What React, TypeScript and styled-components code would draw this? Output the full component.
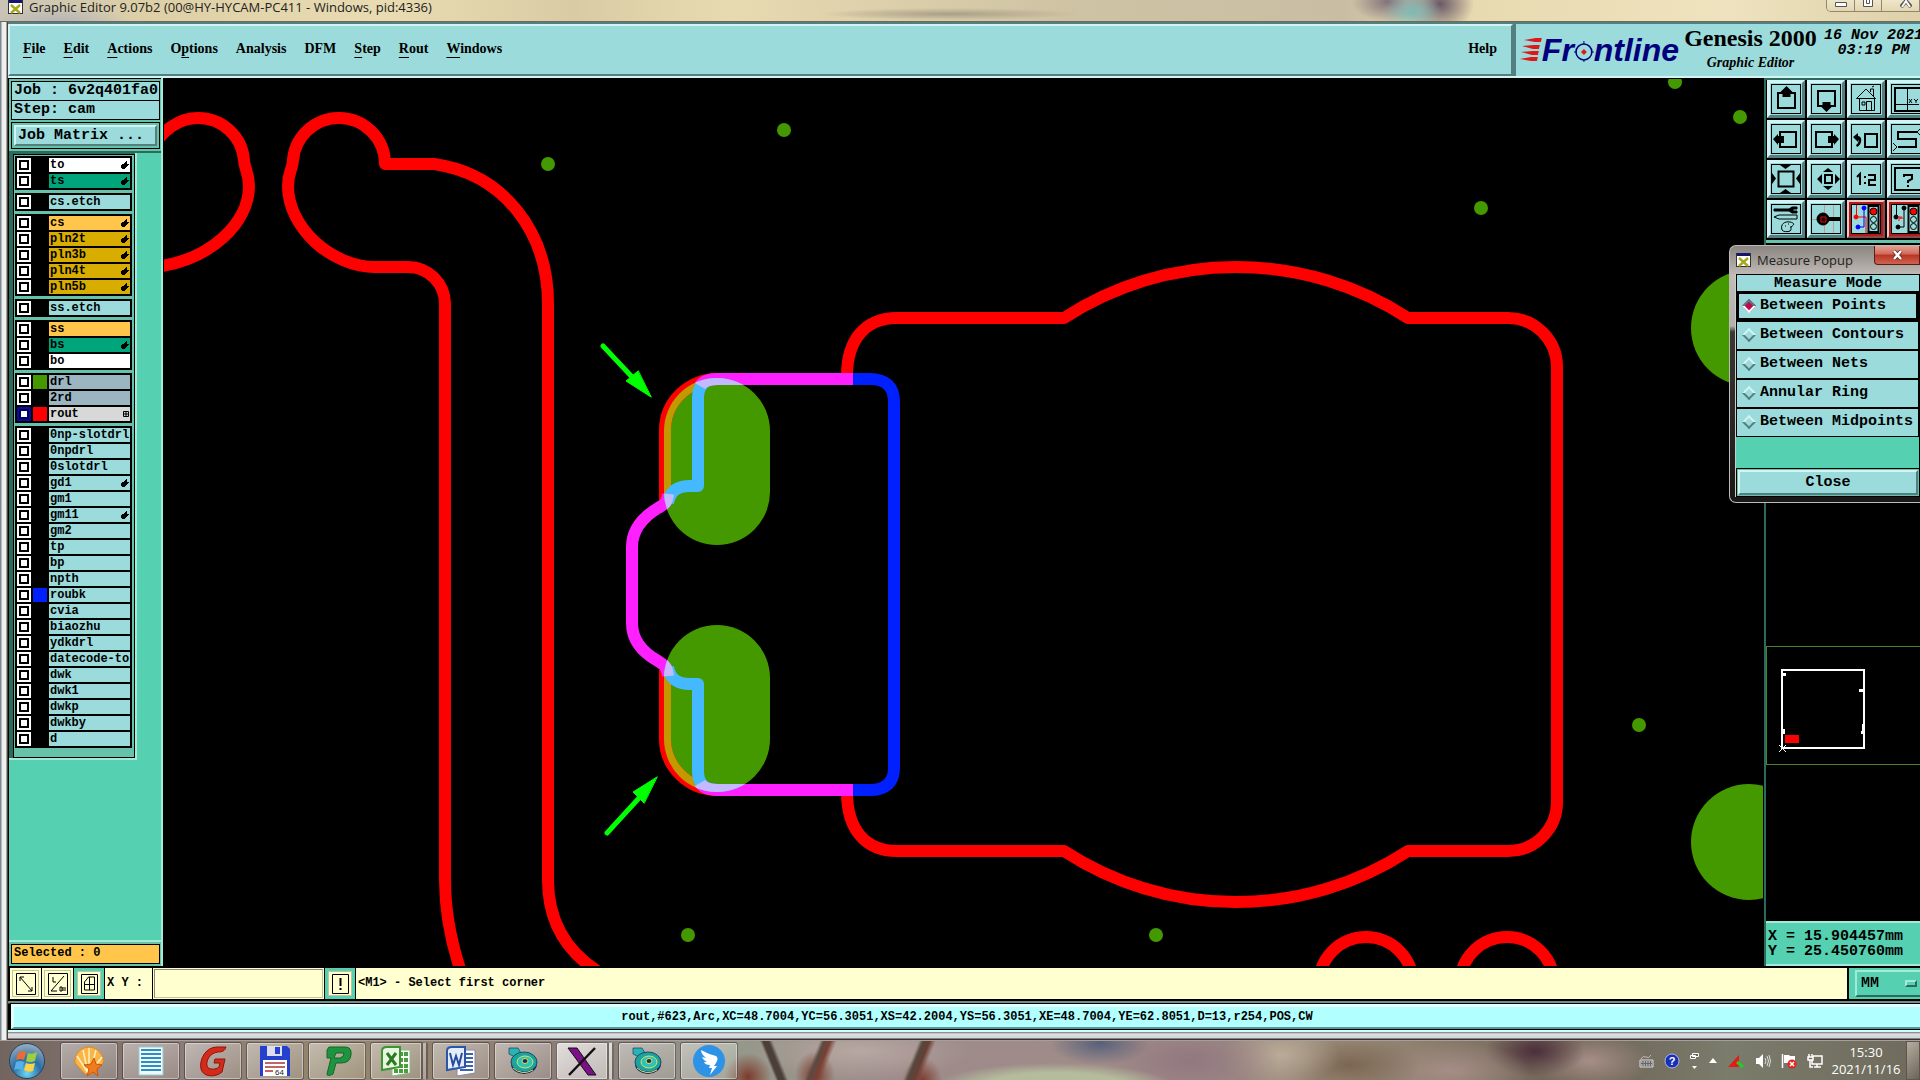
import React from 'react';
import styled, { createGlobalStyle, css } from 'styled-components';

const c = {
  aqua: '#9bdbdb',
  aquaLight: '#d2f4f4',
  aquaDark: '#547f80',
  teal: '#55d0b0',
  tealFrame: '#66c2ab',
  tealLight: '#a5ead8',
  tealDark: '#2d6a5c',
  cream: '#ffffcf',
  green: '#449900',
  red: '#ff0000',
  blue: '#0020ff',
};
const mono = '"Liberation Mono", "DejaVu Sans Mono", monospace';
const serif = '"Liberation Serif", "DejaVu Serif", serif';
const sans = '"Open Sans", "Noto Sans", sans-serif';

const Global = createGlobalStyle`
  * { box-sizing: border-box; }
  body { margin: 0; background: #000; overflow: hidden; }
  button, input, select { font: inherit; color: inherit; margin: 0; padding: 0; border-radius: 0; }
  svg { display: block; }
`;

const bevel = (light: string, dark: string, size = 2) => css`
  border: ${size}px solid;
  border-color: ${light} ${dark} ${dark} ${light};
`;

/* ---------- window ---------- */
const Desktop = styled.div`
  position: relative;
  display: flex;
  flex-direction: column;
  height: 100vh;
  overflow: hidden;
  font: bold 15px/18px ${mono};
  color: #000;
`;
const TitleBar = styled.header`
  display: flex;
  justify-content: space-between;
  align-items: flex-start;
  flex: none;
  height: 22px;
  padding-left: 8px;
  font: 13px/14px ${sans};
  color: #222;
  border-bottom: 1px solid #6f6a58;
  background:
    radial-gradient(ellipse 70px 16px at 60px 22px, #b5b3b8, transparent),
    radial-gradient(ellipse 30px 20px at 1412px 12px, #7fb9b6, transparent),
    radial-gradient(ellipse 34px 28px at 1440px 4px, #6a5866, transparent),
    radial-gradient(ellipse 36px 20px at 1388px 2px, #82707a, transparent),
    radial-gradient(ellipse 130px 6px at 950px 14px, #a99f86, transparent),
    linear-gradient(90deg, #c9c4b6 0, #ded0a6 8%, #e9dcb2 20%, #d9cca4 30%, #e8dab0 38%, #cfc3a4 55%, #c9bea4 70%, #e8dab0 77%, #efe3bf 90%, #ddd0aa 100%);
`;
const Title = styled.div`
  display: flex;
  align-items: center;
  gap: 6px;
  white-space: nowrap;
`;
const Captions = styled.div`
  display: flex;
  width: 94px;
  height: 12px;
  border: 1px solid #8f8773;
  border-top: 0;
  border-bottom-left-radius: 5px;
  overflow: hidden;
`;
const Caption = styled.button<{ $w: number }>`
  display: flex;
  flex: none;
  justify-content: center;
  width: ${p => p.$w}px;
  border: 0;
  border-right: 1px solid #8f8773;
  background: linear-gradient(#efe6ca, #e3d7b0);
`;
const Frame = styled.div`
  display: flex;
  flex-direction: column;
  flex: 1;
  min-height: 0;
  padding-left: 8px;
  background: linear-gradient(90deg, #7c8a90 0, #7c8a90 1px, #e9eef2 2px, #f4f1e8 6px, #555 7px, #333 8px);
`;

/* ---------- menu bar ---------- */
const Top = styled.div`
  display: flex;
  flex: none;
  height: 56px;
  background: ${c.aqua};
  border-top: 2px solid ${c.aquaDark};
  border-bottom: 2px solid ${c.aquaLight};
  overflow: hidden;
`;
const MenuBar = styled.nav`
  display: flex;
  flex: 1;
  align-items: center;
  gap: 18px;
  padding: 0 14px 3px 13px;
  font: bold 14px/18px ${serif};
  ${bevel(c.aquaLight, c.aquaDark)}
`;
const MenuItem = styled.button<{ $end?: boolean }>`
  border: 0;
  background: none;
  margin-left: ${p => (p.$end ? 'auto' : '0')};
  u { text-underline-offset: 4px; text-decoration-thickness: 1px; }
`;
const Brand = styled.div`
  display: flex;
  flex: none;
  width: 407px;
  padding-left: 4px;
  border-left: 3px solid ${c.aquaDark};
  white-space: nowrap;
`;
const Logo = styled.div`
  display: flex;
  align-items: center;
  width: 159px;
  height: 52px;
  flex: none;
  font: italic bold 32px/32px "Liberation Sans", Arial, sans-serif;
  color: #00007c;
`;
const Product = styled.div`
  width: 143px;
  flex: none;
  padding-top: 1px;
  text-align: center;
`;
const ProductName = styled.div`
  font: bold 24px/26px ${serif};
`;
const ProductSub = styled.div`
  font: italic bold 14px/24px ${serif};
`;
const Clock = styled.div`
  flex: none;
  width: 103px;
  padding-top: 4px;
  font: italic bold 15px/15px ${mono};
  text-align: center;
`;

/* ---------- left side ---------- */
const Main = styled.main`
  display: flex;
  flex: 1;
  min-height: 0;
  background: #000;
`;
const Side = styled.aside`
  display: flex;
  flex-direction: column;
  flex: none;
  width: 155px;
  background: ${c.tealFrame};
  border-right: 2px solid ${c.tealLight};
  border-left: 1px solid #000;
`;
const JobInfo = styled.div`
  padding: 2px 1px 2px 2px;
  border-top: 1px solid #000;
`;
const InfoLine = styled.div`
  height: 20px;
  padding-left: 2px;
  border: 1px solid #000;
  background: ${c.aqua};
  line-height: 18px;
  white-space: nowrap;
  & + & { margin-top: -1px; }
`;
const MatrixFrame = styled.div`
  margin: 0 1px 2px 2px;
  padding: 2px;
  border: 1px solid #000;
`;
const MatrixButton = styled.button`
  display: block;
  width: 100%;
  height: 21px;
  padding-left: 2px;
  text-align: left;
  line-height: 17px;
  background: ${c.aqua};
  ${bevel(c.aquaLight, c.aquaDark)}
`;
const LayerPane = styled.div`
  flex: 1;
  min-height: 0;
  background: ${c.teal};
  border-top: 2px solid ${c.tealDark};
  border-bottom: 2px solid ${c.tealLight};
`;
const LayerShade = styled.div`
  width: 128px;
  padding: 1px 0 0 4px;
  background: ${c.tealDark};
  border-right: 2px solid ${c.tealLight};
  border-bottom: 2px solid ${c.tealLight};
`;
const LayerList = styled.div`
  display: flex;
  flex-direction: column;
  gap: 3px;
  padding: 1px 2px 9px 1px;
  border: 1px solid #000;
  background: ${c.tealFrame};
`;
const LayerGroup = styled.div`
  display: flex;
  flex-direction: column;
  gap: 2px;
  padding: 2px;
  width: 117px;
  background: #000;
`;
const LayerRow = styled.label`
  display: grid;
  grid-template-columns: 14px 14px 81px;
  gap: 2px;
  height: 14px;
`;
const LayerBox = styled.input`
  appearance: none;
  width: 14px;
  height: 14px;
  background: #fff;
  border: 2px solid #fff;
  box-shadow: inset 0 0 0 2px #000;
  &:checked { border-color: #0b0b98; box-shadow: inset 0 0 0 2px #00005c; }
`;
const Swatch = styled.span<{ $c?: string }>`
  background: ${p => p.$c || '#000'};
`;
const LayerName = styled.span<{ $bg: string }>`
  display: flex;
  justify-content: space-between;
  align-items: center;
  padding: 0 1px;
  background: ${p => p.$bg};
  font: bold 12px/14px ${mono};
  white-space: nowrap;
`;
const Selected = styled.div`
  flex: none;
  margin: 2px 1px 2px 2px;
  height: 20px;
  padding-left: 2px;
  border: 1px solid #000;
  background: #ffc64b;
  font: bold 12px/17px ${mono};
`;

/* ---------- canvas and right side ---------- */
const Canvas = styled.section`
  flex: 1;
  min-width: 0;
  margin: 1px 1px 0 1px;
  overflow: hidden;
`;
const Right = styled.aside`
  display: flex;
  flex-direction: column;
  flex: none;
  width: 156px;
  border-left: 2px solid ${c.tealDark};
  overflow: hidden;
`;
const Tools = styled.div`
  display: grid;
  grid-template-columns: repeat(4, 38px);
  gap: 2px;
  padding: 0 0 2px 1px;
  border-top: 2px solid ${c.tealDark};
  border-bottom: 3px solid ${c.tealFrame};
`;
const ToolButton = styled.button<{ $hot?: boolean }>`
  width: 38px;
  height: 38px;
  padding: 1px;
  background: ${p => (p.$hot ? '#b01c1c' : c.aqua)};
  ${bevel(c.aquaLight, c.aquaDark, 3)}
  ${p => p.$hot && css`
    border-width: 2px;
    padding: 2px;
    border-color: #f0c8c8 #8a4a4a #8a4a4a #f0c8c8;
  `}
`;
const MiniMap = styled.div`
  margin-top: auto;
  height: 119px;
  border: 1px solid #44862c;
  border-right: 0;
`;
const Coords = styled.div`
  margin-top: 156px;
  height: 45px;
  padding: 6px 0 0 2px;
  border-top: 2px solid ${c.tealLight};
  border-bottom: 2px solid ${c.tealLight};
  background: ${c.teal};
  line-height: 15px;
  white-space: pre;
`;

/* ---------- command and status lines ---------- */
const Command = styled.div`
  display: flex;
  flex: none;
  height: 35px;
  padding: 2px 0 2px 2px;
  gap: 1px;
  background: #000;
  font: bold 12px/14px ${mono};
`;
const CmdButton = styled.button<{ $framed?: boolean }>`
  display: flex;
  align-items: center;
  justify-content: center;
  flex: none;
  width: ${p => (p.$framed ? '30px' : '31px')};
  border: ${p => (p.$framed ? '3px' : '2px')} solid ${p => (p.$framed ? c.teal : c.cream)};
  background: ${c.cream};
  box-shadow: inset 0 0 0 1px #c4c49c;
`;
const XYLabel = styled.label`
  flex: none;
  width: 47px;
  padding: 8px 0 0 2px;
  background: ${c.cream};
  white-space: pre;
`;
const XYField = styled.input`
  flex: none;
  width: 171px;
  padding: 0 4px;
  border: 2px solid;
  border-color: #8c8c74 #c4c49c #c4c49c #8c8c74;
  outline: 1px solid ${c.cream};
  outline-offset: -1px;
  background: ${c.cream};
`;
const Hint = styled.output`
  flex: 1;
  padding: 8px 0 0 2px;
  background: ${c.cream};
`;
const UnitBox = styled.div`
  flex: none;
  position: relative;
  width: 71px;
  margin-left: 1px;
  padding: 2px 0 2px 6px;
  background: ${c.teal};
  overflow: hidden;
`;
const Unit = styled.select`
  appearance: none;
  width: 76px;
  height: 27px;
  padding-left: 4px;
  background: ${c.teal};
  font: bold 15px/18px ${mono};
  ${bevel(c.tealLight, c.tealDark)}
`;
const UnitMark = styled.span`
  position: absolute;
  top: 12px;
  right: 3px;
  width: 12px;
  height: 7px;
  pointer-events: none;
  ${bevel(c.tealLight, c.tealDark)}
`;
const StatusWrap = styled.div`
  flex: none;
  height: 39px;
  padding: 2px 0 0 2px;
  background: linear-gradient(#6f8f8c 0, #6f8f8c 2px, #000 3px, #000 29px, #c9ffff 29px, #c9ffff 31px, #777 31px, #dedede 33px, #d2d4d6 37px, #333 38px);
`;
const Status = styled.div`
  height: 27px;
  border: 1px solid #000;
  border-right: 0;
`;
const StatusText = styled.div`
  height: 25px;
  border-top: 3px solid #e2ffff;
  border-left: 3px solid #e2ffff;
  border-bottom: 2px solid #5b9593;
  background: #b2ffff;
  font: bold 12px/20px ${mono};
  text-align: center;
`;

/* ---------- measure popup ---------- */
const Popup = styled.div`
  position: absolute;
  top: 245px;
  right: 0;
  width: 191px;
  height: 258px;
  padding: 0 0 0 5px;
  border: 1px solid #bbb;
  border-right: 0;
  border-radius: 7px 0 0 7px;
  background: linear-gradient(#8a8580 0, #c3bcb8 30px, #b5b0ac 80px, #3a3734 86px, #1a1816 100%);
`;
const PopupTitle = styled.div`
  display: flex;
  align-items: center;
  gap: 6px;
  height: 28px;
  padding-left: 1px;
  font: 13px/18px ${sans};
  color: #222;
`;
const PopupClose = styled.button`
  align-self: flex-start;
  margin-left: auto;
  width: 46px;
  height: 19px;
  border: 1px solid #5a1c14;
  border-top: 0;
  border-bottom-left-radius: 4px;
  background: linear-gradient(#e0a294 0, #d2695a 45%, #b93422 50%, #cf6250 100%);
`;
const PopupBody = styled.fieldset`
  margin: 0;
  padding: 1px 1px 1px 0;
  min-width: 0;
  height: 223px;
  border: 0;
  border-left: 1px solid #ccc;
  background: #000;
`;
const PopupHead = styled.div`
  height: 16px;
  margin: 0 0 1px 1px;
  background: ${c.aqua};
  line-height: 17px;
  text-align: center;
`;
const Mode = styled.label`
  display: flex;
  align-items: center;
  gap: 6px;
  height: 29px;
  padding: 0 4px 2px 7px;
  border: 1px solid #000;
  background: ${c.aqua};
  white-space: nowrap;
  &:has(input:checked) { border-width: 2px 3px 3px; padding-left: 5px; padding-bottom: 0; }
`;
const Diamond = styled.input`
  appearance: none;
  flex: none;
  width: 10px;
  height: 10px;
  transform: rotate(45deg);
  ${bevel(c.aquaLight, c.aquaDark)}
  &:checked { background: #c00a50; border-color: #547f80 #fff #fff #547f80; }
`;
const PopupGap = styled.div`
  height: 31px;
  background: ${c.teal};
`;
const CloseFrame = styled.div`
  margin: 1px 0 0 1px;
  padding: 1px;
  background: ${c.tealFrame};
`;
const CloseButton = styled.button`
  display: block;
  width: 100%;
  height: 25px;
  background: ${c.aqua};
  ${bevel(c.aquaLight, c.aquaDark)}
`;

/* ---------- taskbar ---------- */
const Taskbar = styled.footer`
  display: flex;
  flex: none;
  align-items: center;
  height: 40px;
  padding-left: 8px;
  border-top: 1px solid #a79f9a;
  color: #fff;
  font: 13px/17px ${sans};
  overflow: hidden;
  background:
    linear-gradient(112deg, transparent 760px, #5a4a42 764px, #7a4034 770px, transparent 776px),
    linear-gradient(112deg, transparent 852px, #54483e 856px, #6a3d32 862px, transparent 868px),
    linear-gradient(68deg, transparent 719px, #4b3f3a 722px, #4b3f3a 727px, transparent 731px),
    radial-gradient(ellipse 20px 24px at 815px 34px, #7c3b2c, transparent),
    radial-gradient(ellipse 24px 24px at 748px 36px, #7c3b2c, transparent),
    radial-gradient(ellipse 20px 24px at 922px 40px, #7c3b2c, transparent),
    radial-gradient(ellipse 120px 24px at 1055px 46px, #b4bc9c 60%, transparent),
    radial-gradient(ellipse 50px 22px at 1100px 2px, #56607a, transparent),
    radial-gradient(ellipse 110px 30px at 860px 10px, #b8a8a2, transparent),
    radial-gradient(ellipse 90px 40px at 1190px 20px, #927780, transparent),
    radial-gradient(ellipse 60px 30px at 1280px 14px, #b9ab98, transparent),
    radial-gradient(ellipse 70px 30px at 1350px 24px, #7b6653, transparent),
    radial-gradient(ellipse 80px 30px at 1450px 30px, #a58d86, transparent),
    radial-gradient(ellipse 50px 26px at 1535px 10px, #4c2f3b, transparent),
    radial-gradient(ellipse 60px 30px at 1590px 20px, #a68e86, transparent),
    linear-gradient(90deg, #72645f 0, #8d7d76 10%, #94866a 18%, #8c7c78 30%, #95998a 38%, #9d8b8a 46%, #a08c88 60%, #9c8c7a 70%, #6e6254 82%, #7a7c6c 90%, #6f6a5c 100%);
`;
const Start = styled.button`
  flex: none;
  width: 38px;
  height: 38px;
  margin-right: 14px;
  border: 0;
  background: none;
`;
const Tasks = styled.div`
  display: flex;
  gap: 4px;
`;
const Task = styled.button<{ $stack?: boolean; $on?: boolean }>`
  display: flex;
  align-items: center;
  justify-content: center;
  width: 58px;
  height: 38px;
  border: 1px solid rgba(40, 30, 30, 0.55);
  border-radius: 3px;
  box-shadow: inset 0 0 0 1px rgba(255, 255, 255, 0.4);
  background: linear-gradient(150deg, rgba(255, 255, 255, ${p => (p.$on ? 0.75 : 0.45)}), rgba(255, 255, 255, ${p => (p.$on ? 0.45 : 0.12)}));
  ${p => p.$stack && css`
    border-right: 7px double rgba(70, 60, 55, 0.7);
  `}
`;
const Tray = styled.div`
  display: flex;
  align-items: center;
  gap: 10px;
  margin-left: auto;
`;
const TrayClock = styled.time`
  width: 70px;
  margin: 0 -5px 0 -2px;
  text-align: center;
`;
const ShowDesktop = styled.button`
  width: 14px;
  height: 39px;
  border: 1px solid #5c564c;
  background: linear-gradient(135deg, #b5ada0, #6c6458);
`;

/* ---------- drawings ---------- */
const XIcon = () => (
  <svg width="15" height="14" viewBox="0 0 15 14">
    <rect x="0.5" y="0.5" width="14" height="13" fill="#fff" stroke="#333" />
    <rect x="1" y="0" width="13" height="3" fill="#16166c" />
    <path d="M3 5l9 8M12 5l-9 8" stroke="#a8a81c" strokeWidth="2.4" />
  </svg>
);
const Hand = () => (
  <svg width="8" height="8" viewBox="0 0 8 8">
    <path d="M0 4h1V3h2V2h1V1h1V0h1v3h2v1H7v1H6v1H5v1H4v1H1V7H0z" fill="#000" />
  </svg>
);
const GridMark = () => (
  <svg width="6" height="6" viewBox="0 0 6 6">
    <path d="M0.5 0.5h5v5h-5zM3 0v6M0 3h6" fill="none" stroke="#000" />
  </svg>
);

const boardOutline = [
  'M150 152 C162 129 180 118 198 118 A46 46 0 0 1 244 160 C244 168 249 172 249 186 C249 222 212 260 155 267',
  'M385 164 A46 46 0 0 0 338 118 A46 46 0 0 0 293 160 C293 168 288 172 288 186 C288 228 332 267 375 267 H408 A37 37 0 0 1 445 304 V880 C445 915 452 945 461 972',
  'M385 160 V164 H434 C504 174 548 232 548 304 V880 C548 925 570 955 602 974',
  'M847 376 C847 340 865 318 897 318 H1064 A315 315 0 0 1 1408 318 H1508 A49 49 0 0 1 1557 367 V802 A49 49 0 0 1 1508 851 H1408 A315 315 0 0 1 1064 851 H897 C865 851 847 829 847 792',
];
const slotTop = 'M718 379 A53 51 0 0 0 665 430 V500';
const slotBottom = 'M718 790 A53 51 0 0 1 665 739 V670';
const plugTop = 'M847 379 H718 C704 379 698 386 698 398 V486 H690 C676 486 670 492 668 503';
const plugBottom = 'M847 790 H718 C704 790 698 783 698 771 V684 H690 C676 684 670 678 668 667';
const plugRight = 'M847 379 H870 C886 379 894 387 894 402 V768 C894 782 886 790 870 790 H847';
const shared = [
  'M847 379 H718 C708 379 703 381 700 386',
  'M847 790 H718 C708 790 703 788 700 783',
  'M668 494 C667 504 664 504 658 508 C640 519 632 532 632 547 V623 C632 638 640 651 658 661 C664 665 667 666 668 676',
];
const holes = [[784, 130], [548, 164], [1675, 82], [1740, 117], [1481, 208], [1639, 725], [688, 935], [1156, 935]];

const Board = () => (
  <svg width="100%" height="100%" fill="none" role="img" aria-label="Board layout">
    <defs>
      <clipPath id="pads">
        <rect x="664" y="378" width="106" height="167" rx="53" />
        <rect x="664" y="625" width="106" height="167" rx="53" />
      </clipPath>
    </defs>
    <g transform="translate(-164 -79)" strokeWidth="12" strokeLinejoin="round">
      {holes.map(([x, y]) => <circle key={x} cx={x} cy={y} r="7" fill={c.green} />)}
      <circle cx="1749" cy="328" r="58" fill={c.green} />
      <circle cx="1749" cy="842" r="58" fill={c.green} />
      <rect x="664" y="378" width="106" height="167" rx="53" fill={c.green} />
      <rect x="664" y="625" width="106" height="167" rx="53" fill={c.green} />
      <g stroke={c.red}>
        {boardOutline.map(d => <path key={d} d={d} />)}
        <circle cx="1366" cy="984" r="47" />
        <circle cx="1507" cy="984" r="47" />
        <path d={slotTop} />
        <path d={slotBottom} />
      </g>
      <path d={plugRight} stroke={c.blue} />
      <g stroke="#ff20ff">
        {shared.map(d => <path key={d} d={d} />)}
        <path d="M846 379h7M846 790h7" />
      </g>
      <g clipPath="url(#pads)">
        <path d={slotTop} stroke="#c49900" />
        <path d={slotBottom} stroke="#c49900" />
        <path d={plugTop} stroke="#44b9ff" />
        <path d={plugBottom} stroke="#44b9ff" />
        <g stroke="#c4b9ff">{shared.map(d => <path key={d} d={d} />)}</g>
      </g>
      <g stroke="#00ff00" strokeWidth="5" strokeLinecap="round">
        <path d="M603 346L634 379M607 833L640 797" />
        <path d="M651 397L626 381L638 371ZM657 777L633 792L644 803Z" fill="#00ff00" strokeWidth="1" />
      </g>
    </g>
  </svg>
);

const solid = { fill: '#000', stroke: 'none' };
const lights = (
  <>
    <path d="M17.5 2h10v26h-10z" strokeWidth="2" />
    <circle cx="22.5" cy="7.5" r="3.5" fill="#f00" />
    <circle cx="22.5" cy="15.5" r="3" />
    <circle cx="22.5" cy="22.5" r="3" />
  </>
);
const toolArt: [string, React.ReactNode][] = [
  ['Pan up', <><path d="M7 9h17v15H7z" strokeWidth="2" /><path d="M15.5 2l6 6h-2v5h-8V8h-2z" {...solid} /></>],
  ['Pan down', <><path d="M7 7h17v15H7z" strokeWidth="2" /><path d="M15.5 28l6-6h-2v-4h-8v4h-2z" {...solid} /></>],
  ['Home', <path d="M5.5 14.5L15 5l9.500 9.500zM8.500 14.500v12h15v-12M15.500 26.500v-9h5v9M11 18h3v3h-3zM19.500 8V5h3v7M21 3l2-1" />],
  ['Window XY', <><path d="M4 4h30v23H4z" strokeWidth="2" /><path d="M16.5 4v22M4 20.5h24M18 15l3 4M21 15l-3 4M23 15l2 2 2-2M25 17v2" /></>],
  ['Pan left', <><path d="M9 8h16v15H9z" strokeWidth="2" /><path d="M2 15l5-5v2h6v7H7v2z" {...solid} /></>],
  ['Pan right', <><path d="M5 8h16v15H5z" strokeWidth="2" /><path d="M28 15l-5-5v2h-6v7h6v2z" {...solid} /></>],
  ['Previous view', <><path d="M14 10h12v13H14z" strokeWidth="2" /><path d="M2 13l5-4v3c5 0 4 9-1 11l-1-2c3-2 3-5 2-5v2z" {...solid} /></>],
  ['Path', <><path d="M27 8H7v7h18v8H7" strokeWidth="2" /><path d="M2 19l4 4-4 4M29 5l-3 3 3 3" /></>],
  ['Zoom in', <><path d="M7.5 7.5h15v15h-15z" strokeWidth="2" /><path d="M9 1h11l-5.500 4zM9 29h11l-5.500-4zM1 9v11l4-5.500zM29 9v11l-4-5.500z" {...solid} /></>],
  ['Zoom out', <><path d="M14 11h7v8h-7z" strokeWidth="2" /><path d="M12 8h10l-5-4zM12 22h10l-5 4zM11 10v10l-5-5zM24 10v10l5-5z" {...solid} /></>],
  ['Scale 1:2', <path d="M6 13l3-3v11M14 12v2M14 18v2M17 11h7v5h-6v5h7" strokeWidth="2" />],
  ['Query', <><path d="M4 4h26v22H4z" strokeWidth="2" /><path d="M13 13v-2h8v4l-4 2v2M17 21v2" strokeWidth="2" /></>],
  ['Setup', <><path d="M3 5h15l3-2h5v2h-4v2h4v2h-5l-3-2H3z" fill="#000" /><path d="M3 13l5-2h18v4H8zM11 26c-2-6 3-9 8-8s4 3 2 4 0 4-2 5-7 1-8-1z" /><path d="M14 22h1M17 20h1M19 23h1" /></>],
  ['Snap', <><path d="M13.5 1v28M22.5 1v28M1 15.5h28" stroke="#c09a9a" /><circle cx="12" cy="15" r="6" fill="#000" /><path d="M17 15h12" strokeWidth="4" /><path d="M10 13h5v5h-5z" stroke="#f00" /></>],
  ['Net analyser', <><path d="M5.5 1v12h9.500v16" stroke="#f00" /><path d="M13 4v19H8" stroke="#00f" /><circle cx="13" cy="4" r="2" fill="#00f" stroke="#00f" /><circle cx="7" cy="23" r="2" fill="#00f" stroke="#00f" /><circle cx="5" cy="13" r="2" fill="#f00" stroke="#f00" />{lights}</>],
  ['Net compare', <><path d="M5.5 1v13M13 4v19H8" /><path d="M8 12v5M8 14h5M10 12v3" stroke="#f00" /><circle cx="13" cy="4" r="2" fill="#000" /><circle cx="7" cy="23" r="2" fill="#000" /><circle cx="5" cy="13" r="2" fill="#000" />{lights}</>],
];

const Compass = () => (
  <svg width="34" height="34" viewBox="0 0 34 34">
    <path d="M3 4h9l3 5-6 4-6-3z" fill="#27b5b0" stroke="#126" strokeWidth="0.6" />
    <ellipse cx="18" cy="20" rx="13" ry="10" fill="#15265c" />
    <ellipse cx="18" cy="18" rx="13" ry="10" fill="#1ba39c" stroke="#1d4a6c" />
    <ellipse cx="19" cy="18" rx="8" ry="6" fill="#2cc4b8" stroke="#d8e06a" />
    <ellipse cx="19" cy="17" rx="3" ry="2.5" fill="#135" stroke="#e8e060" />
    <path d="M7 24q9 8 20 2" stroke="#e3dc78" fill="none" />
  </svg>
);
const taskArt: [string, React.ReactNode, { stack?: boolean; on?: boolean }][] = [
  ['Shell', <svg width="34" height="34" viewBox="0 0 34 34"><path d="M17 3C25 3 33 12 31 19L20 30H13L3 19C2 10 9 3 17 3z" fill="#f9b545" stroke="#e08a1c" /><path d="M16 29L5 12M16 29L11 6M17 29V4M18 29L24 6M18 29L30 13" stroke="#fff0c0" strokeWidth="1.5" /><path d="M22 14l2 6 6 1-5 4 1 7-5-4-6 4 2-7-5-4 7-1z" fill="#f07b1a" stroke="#c8560c" /></svg>, {}],
  ['Notes', <svg width="28" height="32" viewBox="0 0 28 32"><path d="M2 2h24v28H2z" fill="#eef8fd" stroke="#9cc" /><path d="M4 5h20M4 9h20M4 13h20M4 17h20M4 21h20M4 25h20" stroke="#2b8fc0" strokeWidth="2" /></svg>, {}],
  ['G', <svg width="32" height="34" viewBox="0 0 32 34"><path d="M29 3c-1 4-4 5-8 5-8 1-12 8-11 14 1 4 9 4 12 1l1-4h-6l1-4h10l-3 13c-7 6-19 5-21-3C2 15 9 3 20 3z" fill="#d42a1c" stroke="#8e1408" /></svg>, {}],
  ['Save 64', <svg width="34" height="34" viewBox="0 0 34 34"><path d="M2 2h27l3 3v27H2z" fill="#2440cc" /><path d="M9 2h15v10H9z" fill="#dde" /><path d="M17 3h5v7h-5z" fill="#2440cc" /><path d="M5 16h24v16H5z" fill="#fff" /><path d="M7 19h20M7 23h20M7 27h8" stroke="#a33" strokeWidth="1.5" /><text x="17" y="31" fontSize="8" fontFamily="Liberation Sans" fill="#222">64</text></svg>, {}],
  ['P', <svg width="32" height="34" viewBox="0 0 32 34"><path d="M8 3h16q7 0 6 8t-10 8h-5l-3 11q-6 3-6 0l4-16H6V6zM15 9l-2 5h6q4-1 4-5z" fill="#1f9340" fillRule="evenodd" stroke="#106828" /></svg>, {}],
  ['Excel', <svg width="34" height="34" viewBox="0 0 34 34"><path d="M13 6h18v23l-18 3z" fill="#fff" stroke="#8b8" /><path d="M20 10h9M20 16h9M20 22h9M15 27h14" stroke="#4a9f3c" strokeWidth="4" strokeDasharray="4 1" /><path d="M3 7q0-4 5-4h13v20L3 26z" fill="#e8f6e0" stroke="#3d9432" strokeWidth="2" /><path d="M8 9l9 12M17 9L8 21" stroke="#2b7a22" strokeWidth="3" /></svg>, { stack: true }],
  ['Word', <svg width="34" height="34" viewBox="0 0 34 34"><path d="M13 6h18v23l-18 3z" fill="#fff" stroke="#88a" /><path d="M20 10h9M20 14h9M20 18h9M16 22h13M16 26h13" stroke="#3c62b0" strokeWidth="2" /><path d="M3 7q0-4 5-4h13v20L3 26z" fill="#e2ecfa" stroke="#2c55a8" strokeWidth="2" /><path d="M6 9l3 12 3-9 3 9 3-12" stroke="#244b9c" strokeWidth="2" fill="none" /></svg>, {}],
  ['Genesis', <Compass />, {}],
  ['X server', <svg width="34" height="34" viewBox="0 0 34 34"><path d="M3 4h9l19 27h-8z" fill="#7b1088" stroke="#111" /><path d="M30 4L4 31" stroke="#111" strokeWidth="2.5" /></svg>, { stack: true, on: true }],
  ['Genesis toolkit', <Compass />, {}],
  ['DingTalk', <svg width="34" height="34" viewBox="0 0 34 34"><circle cx="17" cy="17" r="16" fill="#2e92e6" /><path d="M9 6q7 4 15 6 3 2 0 7l-2 3h3l-7 9 2-7h-3l1-3q-5 0-6-3l3 0q-4-2-5-5l4 1q-5-4-5-8z" fill="#fff" /></svg>, {}],
];

type Layer = { name: string; bg: string; swatch?: string; mark?: 'hand' | 'grid'; on?: boolean };
const plain = (...names: string[]): Layer[] => names.map(name => ({ name, bg: c.aqua }));
const held = (bg: string, ...names: string[]): Layer[] => names.map(name => ({ name, bg, mark: 'hand' }));
const layers: Layer[][] = [
  [...held('#ffffff', 'to'), ...held('#00a57b', 'ts')],
  plain('cs.etch'),
  [...held('#ffc64b', 'cs'), ...held('#d9ad00', 'pln2t', 'pln3b', 'pln4t', 'pln5b')],
  plain('ss.etch'),
  [{ name: 'ss', bg: '#ffc64b' }, ...held('#00a57b', 'bs'), { name: 'bo', bg: '#ffffff' }],
  [
    { name: 'drl', bg: '#9bb5c1', swatch: c.green },
    { name: '2rd', bg: '#9bb5c1' },
    { name: 'rout', bg: '#d8d8d8', swatch: c.red, mark: 'grid', on: true },
  ],
  [
    ...plain('0np-slotdrl', '0npdrl', '0slotdrl'),
    ...held(c.aqua, 'gd1'),
    ...plain('gm1'),
    ...held(c.aqua, 'gm11'),
    ...plain('gm2', 'tp', 'bp', 'npth'),
    { name: 'roubk', bg: c.aqua, swatch: c.blue },
    ...plain('cvia', 'biaozhu', 'ydkdrl', 'datecode-to', 'dwk', 'dwk1', 'dwkp', 'dwkby', 'd'),
  ],
];

const menus: [string, string, string][] = [
  ['', 'F', 'ile'], ['', 'E', 'dit'], ['', 'A', 'ctions'], ['O', 'p', 'tions'], ['Analysis', '', ''],
  ['DFM', '', ''], ['', 'S', 'tep'], ['', 'R', 'out'], ['', 'W', 'indows'],
];
const modes = ['Between Points', 'Between Contours', 'Between Nets', 'Annular Ring', 'Between Midpoints'];

export default function App() {
  return (
    <Desktop>
      <Global />
      <TitleBar>
        <Title><XIcon />Graphic Editor 9.07b2 (00@HY-HYCAM-PC411 - Windows, pid:4336)</Title>
        <Captions>
          <Caption $w={28} aria-label="Minimize"><svg width="14" height="8"><path d="M1.500 2.500h11v4h-11z" fill="#fff" stroke="#555" /></svg></Caption>
          <Caption $w={27} aria-label="Restore"><svg width="12" height="8"><path d="M1.500 0v6.500h9V0M4.500 0v3.500h3V0" fill="#fff" stroke="#555" /></svg></Caption>
          <Caption $w={48} aria-label="Close"><svg width="12" height="8"><path d="M1 7L6 1l5 6" fill="none" stroke="#555" strokeWidth="4" /><path d="M2 7L6 1l4 6" fill="none" stroke="#fff" strokeWidth="2" /></svg></Caption>
        </Captions>
      </TitleBar>

      <Frame>
        <Top>
          <MenuBar>
            {menus.map(([a, u, b]) => <MenuItem key={a + u + b}>{a}{u && <u>{u}</u>}{b}</MenuItem>)}
            <MenuItem $end>Help</MenuItem>
          </MenuBar>
          <Brand>
            <Logo>
              <svg width="22" height="24" viewBox="0 0 22 24">
                <path d="M4 2l12-2h6l-1 4h-6zM2 8l12-1h6l-1 4h-6zM1 14l12-1h6l-1 4h-6zM0 21l11-2h7l-1 4h-6z" fill="#e01818" />
              </svg>
              Fr
              <svg width="20" height="24" viewBox="0 0 20 24">
                <circle cx="10" cy="14" r="8" fill="none" stroke="#00007c" strokeWidth="1.5" />
                <path d="M10 3v3M10 22v2M0 14h3M17 14h3" stroke="#00007c" />
                <path d="M10 11l3 3-3 3-3-3z" fill="#e01818" />
              </svg>
              ntline
            </Logo>
            <Product>
              <ProductName>Genesis 2000</ProductName>
              <ProductSub>Graphic Editor</ProductSub>
            </Product>
            <Clock>16 Nov 2021<br />03:19 PM</Clock>
          </Brand>
        </Top>

        <Main>
          <Side>
            <JobInfo>
              <InfoLine>Job : 6v2q401fa0</InfoLine>
              <InfoLine>Step: cam</InfoLine>
            </JobInfo>
            <MatrixFrame><MatrixButton>Job Matrix ...</MatrixButton></MatrixFrame>
            <LayerPane>
              <LayerShade>
                <LayerList>
                  {layers.map(group => (
                    <LayerGroup key={group[0].name}>
                      {group.map(({ name, bg, swatch, mark, on }) => (
                        <LayerRow key={name}>
                          <LayerBox type="checkbox" defaultChecked={!!on} />
                          <Swatch $c={swatch} />
                          <LayerName $bg={bg}>{name}{mark === 'hand' && <Hand />}{mark === 'grid' && <GridMark />}</LayerName>
                        </LayerRow>
                      ))}
                    </LayerGroup>
                  ))}
                </LayerList>
              </LayerShade>
            </LayerPane>
            <Selected>Selected : 0</Selected>
          </Side>

          <Canvas><Board /></Canvas>

          <Right>
            <Tools>
              {toolArt.map(([name, art], i) => (
                <ToolButton key={name} aria-label={name} $hot={i > 13}>
                  <svg width="30" height="30" viewBox="0 0 30 30" fill="none" stroke="#000">
                    <rect x="0.5" y="0.5" width="29" height="29" fill={c.aqua} />
                    {art}
                  </svg>
                </ToolButton>
              ))}
            </Tools>
            <MiniMap>
              <svg width="150" height="117" viewBox="1767 647 150 117" fill="none">
                <path d="M1782 670H1864V748H1782Z" stroke="#fff" strokeWidth="2" />
                <path d="M1783 673h3v3h-3zM1859 689h5v3h-5zM1782 729h3v5h-3zM1861 731h4v3h-4zM1862 724h2v8h-2z" fill="#fff" />
                <path d="M1785 735h14v8h-14z" fill="#f00" />
                <path d="M1779 745l7 7M1786 745l-7 7" stroke="#fff" />
              </svg>
            </MiniMap>
            <Coords>{'X = 15.904457mm\nY = 25.450760mm'}</Coords>
          </Right>
        </Main>

        <Command>
          <CmdButton aria-label="Corner mode"><svg width="20" height="24" fill="none" stroke="#000"><path d="M0.5 1.5h19v21h-19zM4 5l12 14M4 9V5h4M16 15v4h-4" /></svg></CmdButton>
          <CmdButton aria-label="Angle mode"><svg width="20" height="24" fill="none" stroke="#000"><path d="M0.5 1.5h19v21h-19zM3 19L16 4M3 19h6M5 5v5h3M12 15h2v4h-2zM15 15v4M17 15v4" /></svg></CmdButton>
          <CmdButton $framed aria-label="Grid"><svg width="17" height="20" fill="none" stroke="#000"><path d="M0.5 0.5h16v19h-16zM3.5 8l4-5h6v13h-10zM3 10.5h11M8.5 3v13" /></svg></CmdButton>
          <XYLabel htmlFor="xy">X Y :</XYLabel>
          <XYField id="xy" type="text" autoFocus defaultValue="" />
          <CmdButton $framed aria-label="Alert"><svg width="17" height="20" fill="none" stroke="#000"><path d="M0.5 0.5h16v19h-16z" /><path d="M8.5 4v8M8.5 14v2" strokeWidth="2" /></svg></CmdButton>
          <Hint>&lt;M1&gt; - Select first corner</Hint>
          <UnitBox>
            <Unit aria-label="Units" defaultValue="MM"><option>MM</option><option>INCH</option></Unit>
            <UnitMark />
          </UnitBox>
        </Command>
        <StatusWrap>
          <Status><StatusText>rout,#623,Arc,XC=48.7004,YC=56.3051,XS=42.2004,YS=56.3051,XE=48.7004,YE=62.8051,D=13,r254,POS,CW</StatusText></Status>
        </StatusWrap>
      </Frame>

      <Taskbar>
        <Start aria-label="Start">
          <svg width="38" height="38" viewBox="0 0 38 38">
            <defs><radialGradient id="orb" cx="50%" cy="85%" r="80%"><stop offset="0" stopColor="#6fd8f4" /><stop offset="0.5" stopColor="#2a6ea4" /><stop offset="1" stopColor="#8fa9bd" /></radialGradient></defs>
            <circle cx="19" cy="19" r="17.5" fill="url(#orb)" stroke="#27425c" />
            <path d="M10 11q4-3 8-1l-2 8q-4-2-8 0z" fill="#ee6a33" />
            <path d="M20 11q4 2 9-1l-2 9q-5 2-9 0z" fill="#9fcf3c" />
            <path d="M8 20q4-2 8 0l-2 8q-4-2-8 0z" fill="#58b0ea" />
            <path d="M18 21q4 2 9 0l-2 8q-5 2-9-1z" fill="#fcd24a" />
          </svg>
        </Start>
        <Tasks>
          {taskArt.map(([name, art, o]) => <Task key={name} aria-label={name} $stack={o.stack} $on={o.on}>{art}</Task>)}
        </Tasks>
        <Tray>
          <svg width="15" height="14" viewBox="0 0 15 14"><path d="M1 6h13v7H1z" fill="#666" stroke="#ddd" /><path d="M2 8h11M2 11h11" stroke="#eee" strokeDasharray="1.5 1" /><path d="M2 5q2-4 5-2t5-2" stroke="#bbb" fill="none" /></svg>
          <svg width="16" height="16" viewBox="0 0 16 16"><circle cx="8" cy="8" r="7" fill="#1a2fb4" stroke="#aab8e8" /><text x="8" y="12" textAnchor="middle" fontSize="11" fontWeight="bold" fontFamily="Liberation Sans" fill="#fff">?</text></svg>
          <svg width="9" height="18" viewBox="0 0 9 18"><path d="M2.5 1.5h6v3h-6zM0.5 3.5h5v3h-5z" fill="#666" stroke="#fff" /><path d="M2 14h5l-2.500 3z" fill="#fff" /></svg>
          <svg width="8" height="5" viewBox="0 0 8 5"><path d="M0 5l4-5 4 5z" fill="#fff" /></svg>
          <svg width="18" height="14" viewBox="0 0 18 14"><path d="M1 13L12 1v12z" fill="#e81818" /><path d="M10 8l6 5" stroke="#20d020" strokeWidth="3" /></svg>
          <svg width="16" height="16" viewBox="0 0 16 16"><path d="M1 5h3l4-4v14l-4-4H1z" fill="#fff" /><path d="M10 5q2 3 0 6M12 3q3 5 0 10M14 2q3 6 0 12" stroke="#ddd" fill="none" /></svg>
          <svg width="16" height="16" viewBox="0 0 16 16"><path d="M1.5 1v14" stroke="#fff" strokeWidth="1.5" /><path d="M3 2h5l1 1h5v7H3z" fill="#fff" /><circle cx="11" cy="11" r="4.5" fill="#dc2a20" /><path d="M9 9l4 4M13 9l-4 4" stroke="#fff" strokeWidth="1.5" /></svg>
          <svg width="16" height="16" viewBox="0 0 16 16" fill="none" stroke="#fff" strokeWidth="1.5"><path d="M6 3h9v8H5V7M7 14h7M10 11v3M2 1v3M5 1v3M1 4h5v3H1zM3 7v7h3" /></svg>
          <TrayClock>15:30<br />2021/11/16</TrayClock>
          <ShowDesktop aria-label="Show desktop" />
        </Tray>
      </Taskbar>

      <Popup role="dialog" aria-label="Measure Popup">
        <PopupTitle>
          <XIcon />Measure Popup
          <PopupClose aria-label="Close popup">
            <svg width="44" height="16" viewBox="0 0 44 16"><path d="M19 4l7 8M26 4l-7 8" stroke="#5a2018" strokeWidth="4" /><path d="M19 4l7 8M26 4l-7 8" stroke="#fff" strokeWidth="2.5" /></svg>
          </PopupClose>
        </PopupTitle>
        <PopupBody>
          <PopupHead>Measure Mode</PopupHead>
          {modes.map((m, i) => (
            <Mode key={m}><Diamond type="radio" name="mode" defaultChecked={i === 0} />{m}</Mode>
          ))}
          <PopupGap />
          <CloseFrame><CloseButton>Close</CloseButton></CloseFrame>
        </PopupBody>
      </Popup>
    </Desktop>
  );
}
